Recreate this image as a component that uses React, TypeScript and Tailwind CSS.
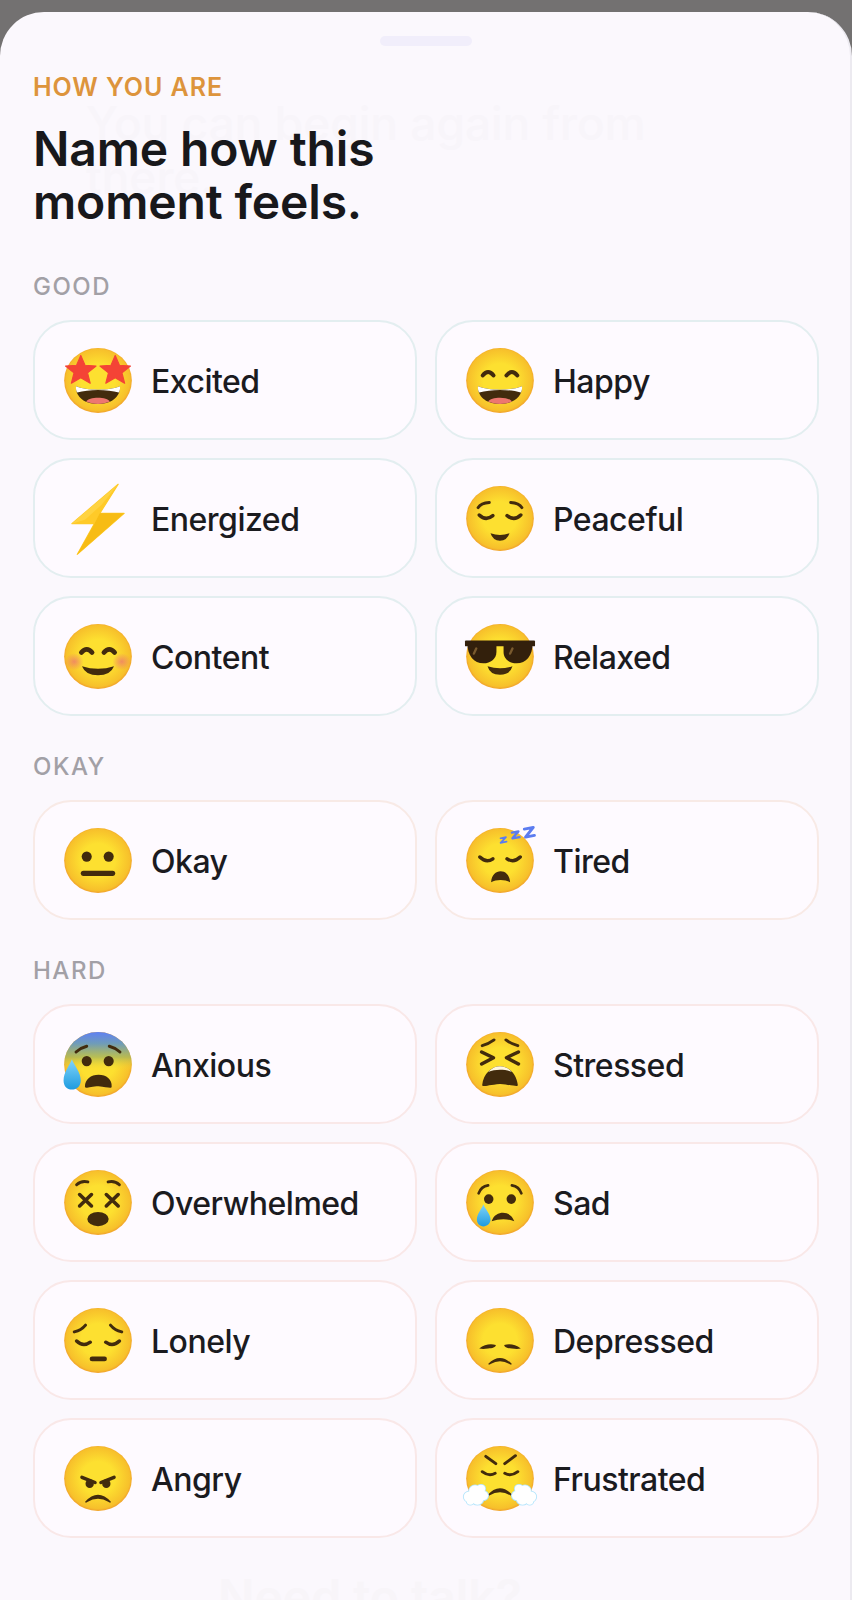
import type { ReactNode } from 'react';

const EYE = '#422B0D';

const Base = ({ scared = false }: { scared?: boolean }) => (
  <>
    <defs>
      <radialGradient id="face" cx="64" cy="63" r="57" gradientUnits="userSpaceOnUse">
        <stop offset="0.5" stopColor="#FDE030" />
        <stop offset="0.94" stopColor="#F7C02B" />
        <stop offset="1" stopColor="#F2A72C" />
      </radialGradient>
      <linearGradient id="scared" x1="64" y1="7" x2="64" y2="75" gradientUnits="userSpaceOnUse">
        <stop offset="0" stopColor="#5F80F4" />
        <stop offset="0.3" stopColor="#6F9CB8" />
        <stop offset="0.65" stopColor="#A8B65C" stopOpacity="0.8" />
        <stop offset="1" stopColor="#FDE030" stopOpacity="0" />
      </linearGradient>
      <radialGradient id="blush" cx="0.5" cy="0.5" r="0.5">
        <stop offset="0" stopColor="#ED7770" stopOpacity="0.75" />
        <stop offset="1" stopColor="#ED7770" stopOpacity="0" />
      </radialGradient>
      <linearGradient id="tear" x1="0" y1="0" x2="0" y2="1">
        <stop offset="0" stopColor="#81D4FA" />
        <stop offset="1" stopColor="#1E9BE0" />
      </linearGradient>
    </defs>
    <circle cx="64" cy="64" r="57" fill="url(#face)" />
    {scared && <circle cx="64" cy="64" r="57" fill="url(#scared)" />}
  </>
);

const Line = ({ d, w = 6 }: { d: string; w?: number }) => (
  <path d={d} fill="none" stroke={EYE} strokeWidth={w} strokeLinecap="round" strokeLinejoin="round" />
);

const Fill = ({ d, color = EYE }: { d: string; color?: string }) => <path d={d} fill={color} />;

const Dots = ({ lx, rx, y, r = 8.5 }: { lx: number; rx: number; y: number; r?: number }) => (
  <>
    <ellipse cx={lx} cy={y} rx={r} ry={r + 0.5} fill={EYE} />
    <ellipse cx={rx} cy={y} rx={r} ry={r + 0.5} fill={EYE} />
  </>
);

const BigSmile = () => (
  <>
    <Fill d="M27 74C44 82 84 82 101 74C102 88 92 105 64 105C36 105 26 88 27 74Z" />
    <Fill color="#FFFFFF" d="M27 74C44 82 84 82 101 74C101.500 78 101 82 99 85C80 79 48 79 29 85C27 82 26.500 78 27 74Z" />
    <Fill color="#ED7770" d="M44 101C48 92 80 92 84 101C72 106.500 56 106.500 44 101Z" />
  </>
);

const Star = ({ cx, cy }: { cx: number; cy: number }) => {
  const points = Array.from({ length: 10 }, (_, i) => {
    const radius = i % 2 === 0 ? 27 : 12;
    const angle = -Math.PI / 2 + (i * Math.PI) / 5;
    return `${cx + radius * Math.cos(angle)},${cy + radius * Math.sin(angle)}`;
  }).join(' ');
  return <polygon points={points} fill="#F44336" stroke="#F44336" strokeWidth="2" strokeLinejoin="round" />;
};

const Cloud = ({ flip = false }: { flip?: boolean }) => {
  const puffs = [
    [12, 96, 9],
    [22, 86, 10],
    [32, 82, 7],
    [26, 100, 10],
    [36, 94, 8],
    [14, 104, 6],
  ];
  return (
    <g transform={flip ? 'translate(128 0) scale(-1 1)' : undefined}>
      {puffs.map(([x, y, r]) => (
        <circle key={`${x}-${y}`} cx={x} cy={y} r={r} fill="#B3E5FC" stroke="#B3E5FC" strokeWidth="3" />
      ))}
      {puffs.map(([x, y, r]) => (
        <circle key={`w-${x}-${y}`} cx={x} cy={y} r={r} fill="#FFFFFF" />
      ))}
    </g>
  );
};

const emojis: Record<string, ReactNode> = {
  excited: (
    <>
      <Base />
      <BigSmile />
      <Star cx={35} cy={47} />
      <Star cx={93} cy={47} />
    </>
  ),
  happy: (
    <>
      <Base />
      <Line w={7} d="M35 55Q44 43 53 55" />
      <Line w={7} d="M75 55Q84 43 93 55" />
      <BigSmile />
    </>
  ),
  energized: (
    <>
      <polygon points="98,4 20,73 58,73 29,127 108,55 67,55" fill="#FFCA28" stroke="#FFCA28" strokeWidth="2" strokeLinejoin="round" />
      <polygon points="67,55 108,55 29,127 58,73" fill="#F7BC14" />
      <polygon points="98,4 20,73 42,66 70,40" fill="#FFE066" opacity="0.4" />
    </>
  ),
  peaceful: (
    <>
      <Base />
      <Line w={5} d="M27 45Q32 37 46 36" />
      <Line w={5} d="M101 45Q96 37 82 36" />
      <Line w={6} d="M29 58Q40 69 52 59" />
      <Line w={6} d="M76 59Q88 69 99 58" />
      <Fill d="M48 90Q64 96 80 90Q76 103 64 103Q52 103 48 90Z" />
    </>
  ),
  content: (
    <>
      <Base />
      <ellipse cx="24" cy="73" rx="16" ry="15" fill="url(#blush)" />
      <ellipse cx="104" cy="73" rx="16" ry="15" fill="url(#blush)" />
      <Line w={8} d="M36 57Q45 46 54 57" />
      <Line w={8} d="M74 57Q83 46 92 57" />
      <Fill d="M37 81Q64 90 91 81Q85 97 64 97Q43 97 37 81Z" />
    </>
  ),
  relaxed: (
    <>
      <Base />
      <rect x="5" y="36" width="118" height="10" rx="1.500" fill="#33200C" />
      <Fill color="#33200C" d="M9 40H58V56C58 68 48 76 36 76C20 76 9 63 9 40Z" />
      <Fill color="#33200C" d="M119 40H70V56C70 68 80 76 92 76C108 76 119 63 119 40Z" />
      <path d="M24 50L20 59" stroke="#7A5A2E" strokeWidth="4" strokeLinecap="round" />
      <path d="M85 50L81 59" stroke="#7A5A2E" strokeWidth="4" strokeLinecap="round" />
      <Fill d="M43 81Q64 88 85 81Q81 96 64 96Q47 96 43 81Z" />
    </>
  ),
  okay: (
    <>
      <Base />
      <Dots lx={45} rx={82} y={57} />
      <rect x="35" y="82" width="58" height="9" rx="4.500" fill={EYE} />
    </>
  ),
  tired: (
    <>
      <Base />
      <Line w={6} d="M30 58Q41 69 52 61" />
      <Line w={6} d="M76 61Q87 69 98 58" />
      <Fill d="M49 102C50 89 57 83 65 83C73 83 80 89 81 102C72 97 58 97 49 102Z" />
      <g fill="none" stroke="#5C7CF0" strokeLinejoin="round" strokeLinecap="round">
        <path strokeWidth="3" d="M65 25L74 23L65 33L75 31" />
        <path strokeWidth="4" d="M84 15L95 13L85 25L97 23" />
        <path strokeWidth="5" d="M105 9L120 6L107 23L122 20" />
      </g>
    </>
  ),
  anxious: (
    <>
      <Base scared />
      <Line w={5} d="M27 42Q34 35 45 32" />
      <Line w={5} d="M83 32Q94 35 101 42" />
      <Dots lx={45} rx={82} y={58} />
      <Fill d="M42 103C42 90 52 82 65 82C78 82 88 90 87 103C87 107 78 103 65 102C52 102 42 107 42 103Z" />
      <Fill color="url(#tear)" d="M20 55C24 66 35 78 35 92C35 102 28 108 20 108C12 108 6 102 6 92C6 78 16 66 20 55Z" />
    </>
  ),
  stressed: (
    <>
      <Base />
      <Line w={5} d="M34 31Q45 28 54 21" />
      <Line w={5} d="M94 31Q83 28 74 21" />
      <Line w={6} d="M33 42L53 52L33 63" />
      <Line w={6} d="M95 42L75 52L95 63" />
      <Fill d="M34 100C36 80 50 67 64 67C78 67 92 80 94 100C94 104 86 100 64 98C42 100 34 104 34 100Z" />
      <Fill color="#FFF8E1" d="M44 77C50 70 57 67 64 67C71 67 78 70 84 77C72 72 56 72 44 77Z" />
    </>
  ),
  overwhelmed: (
    <>
      <Base />
      <Line w={5} d="M28 33Q36 25 47 28" />
      <Line w={5} d="M81 28Q92 25 100 33" />
      <Line w={6} d="M33 50L53 70M53 50L33 70" />
      <Line w={6} d="M78 50L98 70M98 50L78 70" />
      <ellipse cx="64" cy="93" rx="18" ry="12.500" fill={EYE} />
    </>
  ),
  sad: (
    <>
      <Base />
      <Line w={4.500} d="M28 48Q32 36 44 34" />
      <Line w={4.500} d="M100 48Q96 36 84 34" />
      <Dots lx={45} rx={83} y={58} r={8} />
      <Fill d="M50 97C53 86 62 82 69 82C77 82 85 87 88 97C78 92 62 92 50 97Z" />
      <Fill color="url(#tear)" d="M36 67C39 76 48 84 48 94C48 101 42 106 36 106C30 106 25 101 25 94C25 84 33 76 36 67Z" />
    </>
  ),
  lonely: (
    <>
      <Base />
      <Line w={5} d="M24 49Q36 46 43 37" />
      <Line w={5} d="M104 49Q92 46 85 37" />
      <Line w={6} d="M28 65Q39 76 51 67" />
      <Line w={6} d="M77 67Q89 76 100 65" />
      <rect x="50" y="92" width="29" height="8.500" rx="4" fill={EYE} />
    </>
  ),
  depressed: (
    <>
      <Base />
      <Fill d="M29 78C38 71 48 69 57 72C57 76 51 78 44 78C38 79 33 79 29 78Z" />
      <Fill d="M99 78C90 71 80 69 71 72C71 76 77 78 84 78C90 79 95 79 99 78Z" />
      <Fill d="M44 105Q64 84 84 105Q82 107 80 105Q64 96 48 105Q46 107 44 105Z" />
    </>
  ),
  angry: (
    <>
      <Base />
      <Line w={6} d="M37 62L59 71" />
      <Line w={6} d="M91 62L69 71" />
      <ellipse cx="50" cy="73" rx="7" ry="7.500" fill={EYE} />
      <ellipse cx="78" cy="73" rx="7" ry="7.500" fill={EYE} />
      <Fill d="M42 105Q64 80 86 105Q84 107 82 105Q64 94 46 105Q44 107 42 105Z" />
    </>
  ),
  frustrated: (
    <>
      <Base />
      <Line w={5} d="M40 25L57 38" />
      <Line w={5} d="M90 24L72 38" />
      <Line w={5} d="M34 52Q45 61 56 55" />
      <Line w={5} d="M94 52Q83 61 72 55" />
      <Fill d="M42 94Q64 68 86 94Q84 96 82 94Q64 82 46 94Q44 96 42 94Z" />
      <Cloud />
      <Cloud flip />
    </>
  ),
};

interface Mood {
  key: string;
  label: string;
}

const sections: { title: string; border: string; top: string; moods: Mood[] }[] = [
  {
    title: 'GOOD',
    border: 'border-[#E3EEF0]',
    top: 'mt-[44px]',
    moods: [
      { key: 'excited', label: 'Excited' },
      { key: 'happy', label: 'Happy' },
      { key: 'energized', label: 'Energized' },
      { key: 'peaceful', label: 'Peaceful' },
      { key: 'content', label: 'Content' },
      { key: 'relaxed', label: 'Relaxed' },
    ],
  },
  {
    title: 'OKAY',
    border: 'border-[#F8EAE6]',
    top: 'mt-[36px]',
    moods: [
      { key: 'okay', label: 'Okay' },
      { key: 'tired', label: 'Tired' },
    ],
  },
  {
    title: 'HARD',
    border: 'border-[#F9E8E8]',
    top: 'mt-[36px]',
    moods: [
      { key: 'anxious', label: 'Anxious' },
      { key: 'stressed', label: 'Stressed' },
      { key: 'overwhelmed', label: 'Overwhelmed' },
      { key: 'sad', label: 'Sad' },
      { key: 'lonely', label: 'Lonely' },
      { key: 'depressed', label: 'Depressed' },
      { key: 'angry', label: 'Angry' },
      { key: 'frustrated', label: 'Frustrated' },
    ],
  },
];

const MoodCard = ({ mood, border }: { mood: Mood; border: string }) => (
  <button className={`flex h-[120px] items-center gap-[15px] rounded-[38px] border-2 bg-[#FEFAFF] pl-[25px] ${border}`}>
    <svg viewBox="0 0 128 128" preserveAspectRatio="none" className="h-[73px] w-[76px] shrink-0 overflow-visible">
      {emojis[mood.key]}
    </svg>
    <span className="pt-[3px] text-[32px] leading-none font-[450] tracking-[-0.5px] text-[#1B1B1F]">{mood.label}</span>
  </button>
);

export default function App() {
  return (
    <div className="h-[1600px] overflow-hidden bg-[#737171] pt-[12px] font-['Inter',sans-serif]">
      <div className="relative h-[1588px] overflow-hidden rounded-t-[44px] border-r-2 border-[#ECEAF0] bg-[#FBF8FD] pr-[31px] pl-[33px]">
        {/* what shows through the sheet from the page behind it */}
        <div className="pointer-events-none absolute top-[84px] left-[86px] w-[600px] text-[46px] leading-[54px] font-medium text-[#F8F5FA]">
          You can begin again from there.
        </div>
        <div className="pointer-events-none absolute top-[1555px] left-[218px] text-[48px] leading-[60px] font-semibold text-[#F8F5F9]">
          Need to talk?
        </div>

        <div className="relative">
          <div className="mx-auto mt-[24px] h-[10px] w-[92px] rounded-full bg-[#F1EEFB]" />
          <div className="mt-[26px] text-[25px] leading-[30px] font-semibold tracking-[0.95px] text-[#DD943C]">HOW YOU ARE</div>
          <h1 className="mt-[20px] text-[48px] leading-[53px] font-semibold tracking-[-0.15px] text-[#18181B]">
            Name how this
            <br />
            moment feels.
          </h1>
          {sections.map((section) => (
            <section key={section.title} className={section.top}>
              <div className="mb-[18px] text-[24px] leading-[30px] font-medium tracking-[1.5px] text-[#A2A0A6]">{section.title}</div>
              <div className="grid grid-cols-2 gap-[18px]">
                {section.moods.map((mood) => (
                  <MoodCard key={mood.key} mood={mood} border={section.border} />
                ))}
              </div>
            </section>
          ))}
        </div>
      </div>
    </div>
  );
}
